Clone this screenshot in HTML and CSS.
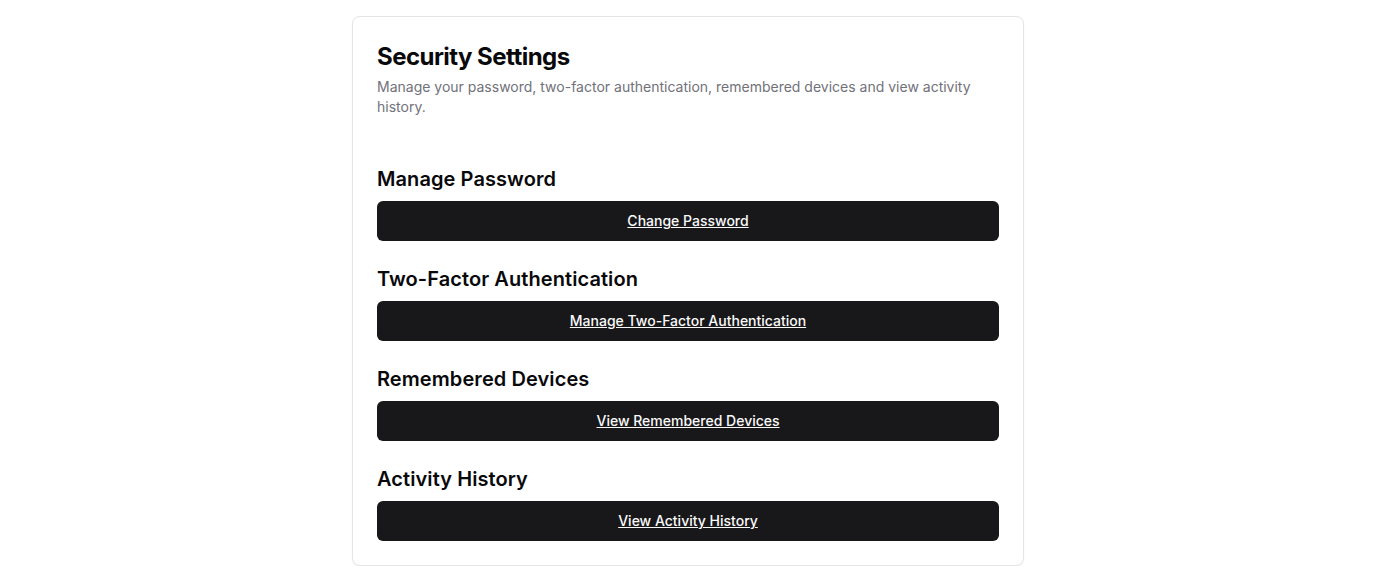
FILE: index.html
```html
<!DOCTYPE html>
<html lang="en">
<head>
<meta charset="utf-8">
<title>Security Settings</title>
<link rel="stylesheet" href="styles.css">
</head>
<body>
<main class="page">
  <section class="card">
    <header class="card-header">
      <h1 class="card-title">Security Settings</h1>
      <p class="card-desc">Manage your password, two-factor authentication, remembered devices and view activity history.</p>
    </header>
    <div class="card-content">
      <div class="section">
        <h2 class="section-title">Manage Password</h2>
        <a class="btn" href="#">Change Password</a>
      </div>
      <div class="section">
        <h2 class="section-title">Two-Factor Authentication</h2>
        <a class="btn" href="#">Manage Two-Factor Authentication</a>
      </div>
      <div class="section">
        <h2 class="section-title">Remembered Devices</h2>
        <a class="btn" href="#">View Remembered Devices</a>
      </div>
      <div class="section">
        <h2 class="section-title">Activity History</h2>
        <a class="btn" href="#">View Activity History</a>
      </div>
    </div>
  </section>
</main>
</body>
</html>
```
FILE: styles.css
```css
* { box-sizing: border-box; }
html, body { margin: 0; padding: 0; background: #ffffff; }
body {
  font-family: Inter, "Liberation Sans", sans-serif;
  color: #09090b;
}
.page {
  display: flex;
  justify-content: center;
  padding-top: 16px;
}
.card {
  width: 672px;
  border: 1px solid #e4e4e7;
  border-radius: 8px;
  box-shadow: 0 1px 2px rgba(0,0,0,0.05);
  padding: 24px;
  background: #fff;
}
.card-header {
  display: flex;
  flex-direction: column;
  gap: 4px;
  padding-bottom: 48px;
}
.card-title {
  margin: 0;
  font-size: 24px;
  line-height: 32px;
  font-weight: 700;
  letter-spacing: -0.54px;
}
.card-desc {
  margin: 0;
  font-size: 14px;
  line-height: 20px;
  color: #71717a;
}
.card-content {
  display: flex;
  flex-direction: column;
  gap: 24px;
}
.section {
  display: flex;
  flex-direction: column;
  gap: 8px;
}
.section-title {
  margin: 0;
  font-size: 20px;
  line-height: 28px;
  font-weight: 600;
  letter-spacing: 0.08px;
}
.btn {
  display: flex;
  align-items: center;
  justify-content: center;
  height: 40px;
  padding-bottom: 1px;
  border-radius: 6px;
  background: #18181b;
  color: #fafafa;
  font-size: 14px;
  font-weight: 500;
  text-decoration: underline;
}
```
